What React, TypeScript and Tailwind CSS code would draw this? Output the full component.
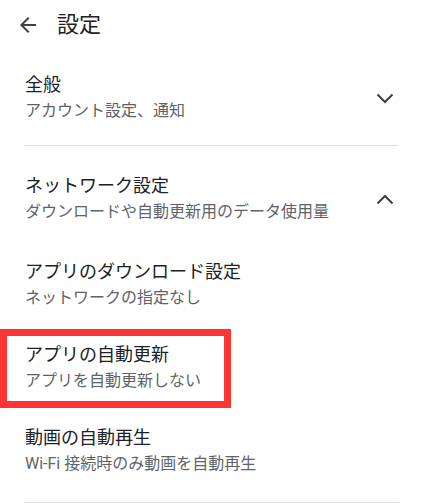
const font = { fontFamily: '"Roboto", "Noto Sans CJK JP", sans-serif' };

function Chevron({ up }: { up?: boolean }) {
  return (
    <svg width="18" height="11" viewBox="0 0 18 11" className="shrink-0">
      <polyline
        points={up ? "1.5,9.5 9,2 16.5,9.5" : "1.5,1.5 9,9 16.5,1.5"}
        fill="none"
        stroke="#3c4043"
        strokeWidth="2"
      />
    </svg>
  );
}

function Item({ title, sub }: { title: string; sub: string }) {
  return (
    <div>
      <div className="text-[18px] leading-[26px] text-[#202124]">{title}</div>
      <div className="text-[16px] leading-[26px] text-[#5f6368]">{sub}</div>
    </div>
  );
}

export default function App() {
  return (
    <div className="w-[423px] h-[504px] bg-white overflow-hidden" style={font}>
      {/* header */}
      <div className="h-[50px] flex items-center pl-4">
        <svg width="24" height="24" viewBox="0 0 24 24" className="shrink-0">
          <path
            d="M20 11H7.83l5.59-5.59L12 4l-8 8 8 8 1.41-1.41L7.83 13H20v-2z"
            fill="#3c4043"
          />
        </svg>
        <div className="ml-[17px] text-[22px] leading-[30px] text-[#202124]">設定</div>
      </div>

      {/* 全般 */}
      <div className="px-[25px]">
        <div className="flex items-center justify-between pt-[22px] pb-[21px] pr-[4px] border-b border-[#dadce0]">
          <Item title="全般" sub="アカウント設定、通知" />
          <Chevron />
        </div>
      </div>

      {/* ネットワーク設定 */}
      <div className="px-[25px] pt-[27px]">
        <div className="flex items-center justify-between pr-[4px]">
          <Item title="ネットワーク設定" sub="ダウンロードや自動更新用のデータ使用量" />
          <Chevron up />
        </div>
        <div className="pt-[34px]">
          <Item title="アプリのダウンロード設定" sub="ネットワークの指定なし" />
        </div>
        <div className="pt-[31px] relative">
          <div className="absolute left-[-25px] top-[18px] w-[231px] h-[79px] border-[7px] border-[#fd3535]" />
          <Item title="アプリの自動更新" sub="アプリを自動更新しない" />
        </div>
        <div className="pt-[31px] pb-[25px] border-b border-[#dadce0] mr-[-1px]">
          <Item title="動画の自動再生" sub="Wi-Fi 接続時のみ動画を自動再生" />
        </div>
      </div>
    </div>
  );
}
